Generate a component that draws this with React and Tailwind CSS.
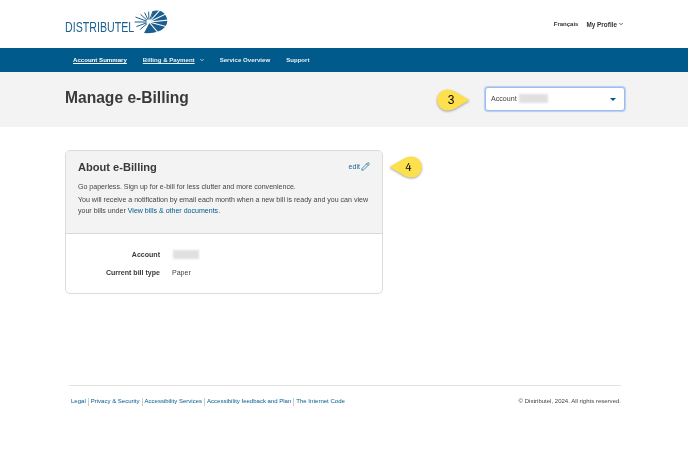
import { ChevronDown, Pencil } from 'lucide-react';

const font = { fontFamily: '"Liberation Sans", Arial, sans-serif' };

function Sunburst() {
  const rays = [
    [200, 14], [222, 11], [245, 10], [268, 10], [290, 11], [180, 14], [160, 13], [140, 11],
  ];
  return (
    <svg width="36" height="24" viewBox="0 0 36 24" className="shrink-0 mb-[1px] -ml-[1px]">
      {/* solid fan on the right */}
      <path d="M18 12 L21 1 Q30 -1 34 6 Q37 12 33 17 Q27 24 12 23 Z" fill="#1c5f8f" />
      {/* white slits cut in the fan */}
      <g stroke="#ffffff" strokeWidth="1.1">
        <line x1="17" y1="12" x2="36" y2="3" />
        <line x1="17" y1="12" x2="37" y2="10" />
        <line x1="17" y1="12" x2="36" y2="17" />
        <line x1="17" y1="12" x2="28" y2="25" />
        <line x1="17" y1="12" x2="29" y2="-1" />
      </g>
      {/* loose rays on the left */}
      <g stroke="#1c5f8f" strokeWidth="1" strokeLinecap="round">
        {rays.map(([deg, len]) => {
          const r = (deg * Math.PI) / 180;
          return (
            <line
              key={deg}
              x1={17 + Math.cos(r) * 3}
              y1={12 + Math.sin(r) * 3}
              x2={17 + Math.cos(r) * len}
              y2={12 + Math.sin(r) * len}
            />
          );
        })}
      </g>
    </svg>
  );
}

function Callout({ n, side, className = '' }) {
  const right = side === 'right';
  return (
    <div className={`relative w-[33px] h-[22px] flex items-center justify-center ${className}`}>
      <svg width="33" height="22" viewBox="0 0 33 22" className="absolute inset-0 drop-shadow-[0_1px_1px_rgba(0,0,0,0.35)]">
        {right ? (
          <path d="M10.5 0.5 Q14 0.5 18 2.5 L32.5 11 L18 19.5 Q14 21.5 10.5 21.5 A10.5 10.5 0 0 1 10.5 0.5 Z" fill="#fce04e" />
        ) : (
          <path d="M22.5 0.5 Q19 0.5 15 2.5 L0.5 11 L15 19.5 Q19 21.5 22.5 21.5 A10.5 10.5 0 0 0 22.5 0.5 Z" fill="#fce04e" />
        )}
      </svg>
      <span className={`relative text-[12px] text-black ${right ? 'mr-[5px]' : 'ml-[6px] font-serif'}`}>{n}</span>
    </div>
  );
}

function Blur({ className }) {
  return <div className={`bg-[#e0e0e0] blur-[1px] ${className}`} />;
}

export default function App() {
  return (
    <div style={font} className="w-[688px] h-[471px] bg-white overflow-hidden blur-[0.3px]">
      {/* Top header */}
      <header className="h-[48px] pl-[65px] pr-[64px] flex items-center justify-between">
        <div className="flex items-end mb-[4px]">
          <span className="w-[68px] origin-left scale-x-[0.76] whitespace-nowrap text-[14px] leading-none text-[#1c5f8f] mb-[1px]">DISTRIBUTEL</span>
          <Sunburst />
        </div>
        <div className="flex items-center gap-[8px] text-[6.4px] text-[#333] font-bold mt-[1px]">
          <span className="text-[6px]">Français</span>
          <span className="flex items-center gap-[1px]">
            My Profile <ChevronDown size={6} strokeWidth={3} />
          </span>
        </div>
      </header>

      {/* Nav */}
      <nav className="h-[24px] bg-[#005a8c] pl-[73px] flex items-center gap-[16px] text-[6.1px] font-bold text-[#e6eff4]">
        <span className="underline text-white">Account Summary</span>
        <span className="flex items-center gap-[4px] -mr-[1px]">
          <span className="underline">Billing &amp; Payment</span>
          <ChevronDown size={6} strokeWidth={3} />
        </span>
        <span>Service Overview</span>
        <span>Support</span>
      </nav>

      {/* Page title band */}
      <div className="h-[55px] bg-[#f3f3f3] pl-[65px] pr-[63px] flex items-center justify-between">
        <h1 className="text-[15.6px] font-bold text-[#3a3a3a] leading-none mb-[4px]">Manage e-Billing</h1>
        <div className="flex items-center gap-[15px]">
          <Callout n="3" side="right" className="mt-[1px]" />
          <div className="w-[140px] h-[24px] mb-[1px] bg-white rounded-[3px] border border-[#9dbdf0] shadow-[0_0_1px_1px_#b5cdf2] flex items-center justify-between pl-[5px] pr-[8px]">
            <div className="flex items-center gap-[2px]">
              <span className="text-[7.1px] text-[#444]">Account</span>
              <Blur className="w-[29px] h-[9px]" />
            </div>
            <div className="w-0 h-0 border-x-[3px] border-x-transparent border-t-[3px] border-t-[#005a8c]" />
          </div>
        </div>
      </div>

      {/* Card row */}
      <div className="pl-[65px] pt-[23px] flex items-start gap-[6px] h-[258px]">
        <section className="w-[318px] border border-[#dcdcdc] rounded-[5px] overflow-hidden">
          <div className="h-[83px] bg-[#f3f3f3] border-b border-[#d8d8d8] px-[12px] pt-[9px]">
            <div className="flex items-center justify-between">
              <h2 className="text-[11.1px] font-bold text-[#3a3a3a] leading-[14px]">About e-Billing</h2>
              <span className="flex items-center gap-[1px] text-[7.1px] text-[#1a6c9c]">
                edit <Pencil size={9} />
              </span>
            </div>
            <p className="text-[7.05px] leading-[11px] text-[#444] mt-[7px]">
              Go paperless. Sign up for e-bill for less clutter and more convenience.
            </p>
            <p className="text-[7.05px] leading-[11px] text-[#444] mt-[2px]">
              You will receive a notification by email each month when a new bill is ready and you can view your bills under{' '}
              <span className="text-[#005a8c]">View bills &amp; other documents</span>.
            </p>
          </div>
          <div className="h-[59px] grid grid-cols-[94px_1fr] gap-x-[12px] gap-y-[7px] content-center text-[7.05px] leading-[11px]">
            <span className="text-right font-bold text-[#3a3a3a]">Account</span>
            <Blur className="w-[26px] h-[9px] self-center ml-[1px]" />
            <span className="text-right font-bold text-[#3a3a3a]">Current bill type</span>
            <span className="text-[#444]">Paper</span>
          </div>
        </section>
        <Callout n="4" side="left" className="mt-[6px]" />
      </div>

      {/* Footer */}
      <footer className="ml-[69px] mr-[67px] border-t border-[#e2e2e2] pt-[11px] pl-[2px] flex items-center justify-between text-[6.03px] leading-[9px]">
        <div className="flex items-center text-[#005a8c]">
          <span>Legal</span>
          <span className="w-px h-[8px] bg-[#ccc] mx-[2px]" />
          <span>Privacy &amp; Security</span>
          <span className="w-px h-[8px] bg-[#ccc] mx-[2px]" />
          <span>Accessibility Services</span>
          <span className="w-px h-[8px] bg-[#ccc] mx-[2px]" />
          <span>Accessibility feedback and Plan</span>
          <span className="w-px h-[8px] bg-[#ccc] mx-[2px]" />
          <span>The Internet Code</span>
        </div>
        <span className="text-[#444]">© Distributel, 2024. All rights reserved.</span>
      </footer>
    </div>
  );
}
